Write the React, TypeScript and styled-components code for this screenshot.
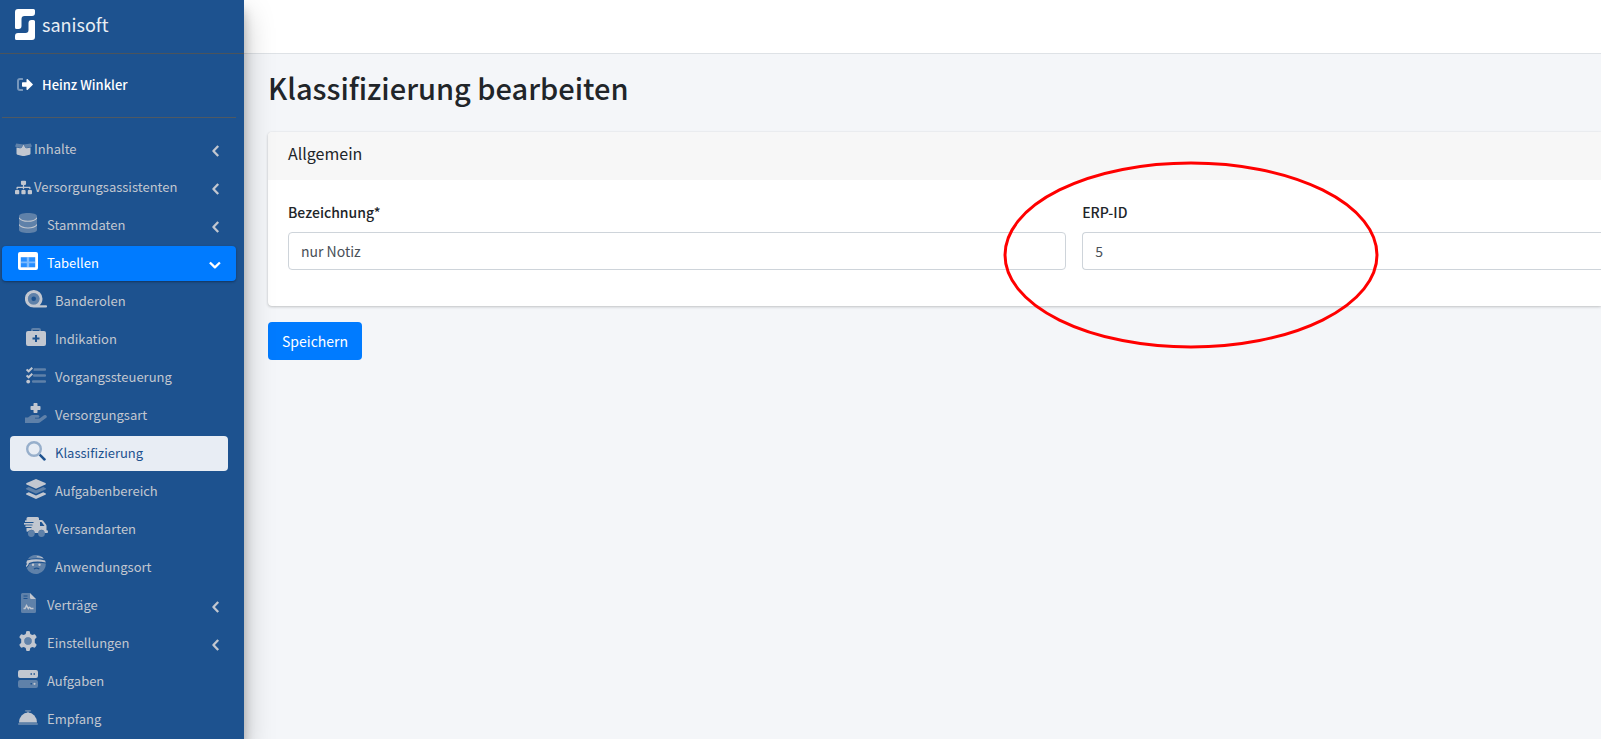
import React from "react";
import styled, { createGlobalStyle, css } from "styled-components";
import { FaSitemap } from "react-icons/fa";

const GlobalStyle = createGlobalStyle`
  *, *::before, *::after { box-sizing: border-box; }
  body {
    margin: 0;
    background: #f4f6f9;
    color: #212529;
    font-family: "Noto Sans CJK SC", "Noto Sans", sans-serif;
    font-size: 14px;
    line-height: 24px;
    overflow-x: hidden;
  }
`;

const Shell = styled.div`
  display: grid;
  grid-template-columns: 244px minmax(0, 1fr);
  min-height: 100vh;
`;

const Sidebar = styled.aside`
  position: relative;
  z-index: 1;
  background: #1d528f;
  color: #c2c7d0;
  font-size: 13px;
  box-shadow: 0 14px 28px rgba(0, 0, 0, 0.25), 0 10px 10px rgba(0, 0, 0, 0.22);
`;

const Brand = styled.a`
  display: flex;
  align-items: center;
  gap: 7px;
  height: 54px;
  padding: 0 15px 4px;
  border-bottom: 1px solid #4b545c;
  color: #e9eef4;
  font-size: 18px;
  text-decoration: none;
`;

const BrandName = styled.span`
  padding-bottom: 2px;
`;

const UserPanel = styled.div`
  display: flex;
  height: 64px;
  margin: 0 8px 14px 2px;
  border-bottom: 1px solid #4f5962;
`;

const UserLink = styled.a`
  display: flex;
  align-items: center;
  gap: 9px;
  padding: 0 0 2px 15px;
  color: #fff;
  font-weight: 500;
  text-decoration: none;
`;

const NavList = styled.ul<{ $nested?: boolean }>`
  display: flex;
  flex-direction: column;
  gap: 3px;
  margin: 0;
  padding: ${(p) => (p.$nested ? "3px 8px 0" : "0 8px 0 2px")};
  list-style: none;
`;

type Tone = "plain" | "open" | "current";

const NavLink = styled.a<{ $tone: Tone }>`
  display: flex;
  align-items: center;
  height: 35px;
  padding: 0 15px 0 13px;
  border-radius: 4px;
  color: inherit;
  text-decoration: none;
  ${(p) =>
    p.$tone === "open" &&
    css`
      background: #007bff;
      color: #fff;
      box-shadow: 0 1px 3px rgba(0, 0, 0, 0.12), 0 1px 2px rgba(0, 0, 0, 0.24);
    `}
  ${(p) =>
    p.$tone === "current" &&
    css`
      background: #e8edf4;
      color: #1d528f;
    `}
`;

const IconSlot = styled.span<{ $small?: boolean }>`
  display: flex;
  flex: none;
  justify-content: center;
  width: ${(p) => (p.$small ? 17 : 26)}px;
  margin-right: ${(p) => (p.$small ? 2 : 6)}px;
  padding-bottom: ${(p) => (p.$small ? 0 : 5)}px;
`;

const NavText = styled.span`
  flex: 1;
  padding-bottom: 2px;
`;

const Content = styled.div`
  min-width: 0;
`;

const TopBar = styled.header`
  height: 54px;
  background: #fff;
  border-bottom: 1px solid #dee2e6;
`;

const Page = styled.main`
  padding: 14px 0 16px 24px;
`;

const Title = styled.h1`
  margin: 0 0 26px;
  font-size: 29px;
  font-weight: 500;
  line-height: 38px;
`;

const Card = styled.section`
  margin-bottom: 16px;
  border-radius: 4px 0 0 4px;
  background: #fff;
  box-shadow: 0 0 1px rgba(0, 0, 0, 0.125), 0 1px 3px rgba(0, 0, 0, 0.2);
`;

const CardHeader = styled.h2`
  margin: 0;
  padding: 9px 20px 15px;
  border-radius: 4px 0 0 0;
  background: #f7f7f7;
  font-size: 16px;
  font-weight: 400;
  line-height: 24px;
`;

const CardBody = styled.div`
  display: grid;
  grid-template-columns: 3fr 2fr;
  gap: 16px;
  padding: 20px 0 36px 20px;
`;

const Field = styled.div`
  position: relative;
  display: flex;
  flex-direction: column;
  gap: 8px;
`;

const Label = styled.label`
  font-weight: 500;
`;

const Input = styled.input<{ $flush?: boolean }>`
  width: 100%;
  height: 38px;
  padding: 0 12px;
  border: 1px solid #ced4da;
  border-right-width: ${(p) => (p.$flush ? 0 : 1)}px;
  border-radius: ${(p) => (p.$flush ? "4px 0 0 4px" : "4px")};
  background: #fff;
  color: #495057;
  font: inherit;
`;

const Highlight = styled.svg`
  position: absolute;
  top: -39px;
  left: -79px;
  pointer-events: none;
`;

const SaveButton = styled.button`
  height: 38px;
  padding: 0 14px;
  border: 0;
  border-radius: 4px;
  background: #007bff;
  color: #fff;
  font: inherit;
`;

const Drawing = ({ w, h, children }: { w: number; h: number; children: React.ReactNode }) => (
  <svg width={w} height={h} viewBox={`0 0 ${w} ${h}`} fill="currentColor" aria-hidden="true">
    {children}
  </svg>
);

const Logo = () => (
  <Drawing w={20} h={31}>
    <g fill="#fff">
      <path d="M3 0H18.500Q20 0 20 1.500V4Q20 7 17 7H9.500Q6.500 7 6.500 10V17Q6.500 20 3.500 20H1.500Q0 20 0 18.500V3Q0 0 3 0Z" />
      <path d="M17 31H1.500Q0 31 0 29.500V27Q0 24 3 24H10.500Q13.500 24 13.500 21V14Q13.500 11 16.500 11H18.500Q20 11 20 12.500V28Q20 31 17 31Z" />
    </g>
  </Drawing>
);

const SignOutIcon = () => (
  <Drawing w={16} h={13}>
    <path opacity=".4" d="M5.500 0H3Q0 0 0 3V10Q0 13 3 13H5.500Q6 13 6 12.500V11.500Q6 11 5.500 11H3Q2 11 2 10V3Q2 2 3 2H5.500Q6 2 6 1.500V.5Q6 0 5.500 0Z" />
    <path d="M15.600 5.900L10.800 1.200Q9.700 .5 9.500 1.800V4.300H5.700Q5 4.300 5 5V8Q5 8.700 5.700 8.700H9.500V11.200Q9.700 12.500 10.800 11.800L15.600 7.100Q16.200 6.500 15.600 5.900Z" />
  </Drawing>
);

const BoxIcon = () => (
  <Drawing w={17} h={13}>
    <path opacity=".4" d="M1.200 .6L8.500 1.500L6.500 4.500Q6 5.200 5.300 5L.6 3.800Q0 3.500 .2 3ZM15.800 .6L8.500 1.500L10.500 4.500Q11 5.200 11.700 5L16.400 3.800Q17 3.500 16.800 3Z" />
    <path d="M8.500 1.500L10.200 4.500Q10.800 5.500 12 5.300L15.500 4.400V10.500Q15.500 11.400 14.600 11.700L9.500 12.900Q8.500 13.100 7.500 12.900L2.400 11.700Q1.500 11.400 1.500 10.500V4.400L5 5.300Q6.200 5.500 6.800 4.500Z" />
  </Drawing>
);

const DatabaseIcon = () => (
  <Drawing w={18} h={20}>
    <path opacity=".4" d="M0 3C0 1.300 4 0 9 0S18 1.300 18 3V17C18 18.700 14 20 9 20S0 18.700 0 17Z" />
    <path fill="none" stroke="currentColor" strokeWidth="1.100" d="M0 4.800C1.500 7.200 5 8.300 9 8.300S16.500 7.200 18 4.800M0 11.600C1.500 14 5 15 9 15S16.500 14 18 11.600" />
  </Drawing>
);

const TableIcon = () => (
  <Drawing w={20} h={18}>
    <path fillRule="evenodd" d="M2 0H18Q20 0 20 2V16Q20 18 18 18H2Q0 18 0 16V2Q0 0 2 0ZM2.800 5.300V15.200H17.200V5.300Z" />
    <path opacity=".4" d="M2.800 9.600H8.800V5.300H11.200V9.600H17.200V11.200H11.200V15.200H8.800V11.200H2.800Z" />
    <path opacity=".15" d="M2.800 5.300H17.200V15.200H2.800Z" />
  </Drawing>
);

const TapeIcon = () => (
  <Drawing w={22} h={18}>
    <path fillRule="evenodd" d="M8.700 0A8.700 8.700 0 0 1 17.500 8.700C17.500 11.500 16.300 13.800 14.700 15.200H21Q22 15.200 22 16V16.800Q22 17.600 21 17.600H8.700A8.800 8.800 0 0 1 8.700 0ZM8.700 3A5.800 5.800 0 1 0 8.700 14.600A5.800 5.800 0 1 0 8.700 3Z" />
    <path opacity=".4" fillRule="evenodd" d="M8.700 3A5.800 5.800 0 1 1 8.700 14.600A5.800 5.800 0 1 1 8.700 3ZM8.700 6.500A2.300 2.300 0 1 0 8.700 11.100A2.300 2.300 0 1 0 8.700 6.500Z" />
  </Drawing>
);

const MedkitIcon = () => (
  <Drawing w={20} h={18}>
    <path opacity=".4" d="M5 3.500V2Q5 0 7 0H13Q15 0 15 2V3.500H13V2H7V3.500Z" />
    <path fillRule="evenodd" d="M2 3H18Q20 3 20 5V16Q20 18 18 18H2Q0 18 0 16V5Q0 3 2 3ZM9 7V9.500H6.500V11.500H9V14H11V11.500H13.500V9.500H11V7Z" />
  </Drawing>
);

const TasksIcon = () => (
  <Drawing w={20} h={17}>
    <path opacity=".4" d="M8 1.200H19Q20 1.200 20 2V2.900Q20 3.700 19 3.700H8Q7 3.700 7.500 2.900ZM8 7.200H19Q20 7.200 20 8V8.900Q20 9.700 19 9.700H8Q7 9.700 7 8.900V8Q7 7.200 8 7.200ZM7 13.200H19Q20 13.200 20 14V14.900Q20 15.700 19 15.700H7Q6 15.700 6 14.900V14Q6 13.200 7 13.200Z" />
    <path fill="none" stroke="currentColor" strokeWidth="2" d="M.6 2.400L2.600 4.300L6.300 .7M.6 8.400L2.600 10.300L6.300 6.700" />
    <circle cx="2.200" cy="14.600" r="1.900" />
  </Drawing>
);

const HandIcon = () => (
  <Drawing w={22} h={20}>
    <path d="M9.200 0H11.800Q12.500 0 12.500 .7V3H14.800Q15.500 3 15.500 3.700V6.300Q15.500 7 14.800 7H12.500V9.300Q12.500 10 11.800 10H9.200Q8.500 10 8.500 9.300V7H6.200Q5.500 7 5.500 6.300V3.700Q5.500 3 6.200 3H8.500V.7Q8.500 0 9.200 0Z" />
    <path opacity=".4" d="M0 14.500H3L5 13Q6.200 12 7.500 12H13Q14.600 12.200 14.500 13.600Q14.300 14.800 13 14.800H10V15.500H14.500L19 12.300Q20.500 11.500 21.500 12.700Q22.300 13.800 21.300 14.800L15.500 19Q14.400 20 13 20H0Z" />
  </Drawing>
);

const SearchIcon = () => (
  <Drawing w={20} h={20}>
    <circle cx="8" cy="8" r="6.800" fill="none" stroke="currentColor" strokeWidth="2.400" opacity=".4" />
    <path d="M12.800 14.500L14.500 12.800L19.600 17.700Q20.200 18.400 19.400 19.300Q18.500 20.100 17.700 19.600Z" />
  </Drawing>
);

const LayersIcon = () => (
  <Drawing w={20} h={20}>
    <path d="M10 0L19.400 4.100Q20.500 5 19.400 5.600L10 9.700L.6 5.600Q-.5 5 .6 4.100Z" />
    <path opacity=".4" d="M2.800 8L10 11.200L17.200 8L19.400 9.100Q20.500 9.800 19.400 10.600L10 14.700L.6 10.600Q-.5 9.800 .6 9.100Z" />
    <path d="M2.800 13.200L10 16.400L17.200 13.200L19.400 14.300Q20.500 15 19.400 15.800L10 20L.6 15.800Q-.5 15 .6 14.300Z" />
  </Drawing>
);

const TruckIcon = () => (
  <Drawing w={24} h={20}>
    <path fillRule="evenodd" d="M4 0H13.500Q15 0 15 1.500V3H17.500Q18.300 3 18.900 3.600L22 7.500Q22.500 8 22.500 9V13.300H23.300Q24 13.500 24 14.500Q24 16 23.300 16H20.800Q20.300 12.700 17.500 12.700T14.200 16H10.800Q10.300 12.700 7.300 12.700Q5.500 12.700 4 14.200Q2.500 15.700 2.500 13.500V11H7.500V10H1.500V8.500H8.500V7.500H0V6H9.500V5H1V3.500H2.500V1.500Q2.500 0 4 0ZM16 5V9H20.500L17.500 5Z" />
    <g opacity=".4">
      <path d="M1 3.500H10.500V5H1ZM0 6H9.500V7.500H0ZM1.500 8.500H8.500V10H1.500Z" />
      <circle cx="7.300" cy="16.500" r="3.400" />
      <circle cx="17.500" cy="16.500" r="3.400" />
    </g>
  </Drawing>
);

const BandageIcon = () => (
  <Drawing w={20} h={20}>
    <path opacity=".4" fillRule="evenodd" d="M1.800 4.200A10 10 0 0 1 18 4Q11 2.200 1.800 4.200ZM.7 13.200Q2.800 11.700 3.500 9Q10 7 19.800 8.500A10 10 0 0 1 .7 13.200ZM8.200 14.500Q10.500 13 13 14.500L13.600 13.600Q10.500 11.500 7.600 13.600Z" />
    <path d="M1 5.500Q10 3 19 5.500L19.800 7.500Q10 5.500 3 8Q2.500 10.500 .4 12.200L0 10.500Q1 9.500 1.200 8.200L.2 8.500ZM11 1.300Q14 1.200 16 2L17.500 3.500Q13 2.200 10.500 2.300Z" />
    <circle cx="7" cy="9.800" r="1.200" />
    <circle cx="13.500" cy="9.800" r="1.200" />
  </Drawing>
);

const ContractIcon = () => (
  <Drawing w={15} h={20}>
    <path opacity=".4" fillRule="evenodd" d="M1.500 0H9V4.500Q9 6 10.500 6H15V18.500Q15 20 13.500 20H1.500Q0 20 0 18.500V1.500Q0 0 1.500 0ZM2.500 2.500V3.500H6.500V2.500ZM2.500 5V6H6.500V5Z" />
    <path d="M9 0L15 6H10Q9 6 9 5Z" />
    <path fill="none" stroke="currentColor" strokeWidth="1.500" d="M2.500 15.500H4L5.500 12.500L7.300 15.500Q8.500 13 9.700 15.500H12.500" />
  </Drawing>
);

const CogIcon = () => (
  <Drawing w={20} h={20}>
    <circle cx="10" cy="10" r="3.700" opacity=".4" />
    <path fillRule="evenodd" d="M8.300 .3Q10 -.1 11.700 .3L12.300 2.900L14.200 4L16.800 3.200Q18.200 4.800 18.700 6.300L16.800 8.200V11.800L18.700 13.700Q18.200 15.200 16.800 16.800L14.200 16L12.300 17.100L11.700 19.700Q10 20.100 8.300 19.700L7.700 17.100L5.800 16L3.200 16.800Q1.800 15.200 1.300 13.700L3.200 11.800V8.200L1.300 6.300Q1.800 4.800 3.200 3.200L5.800 4L7.700 2.900ZM10 6.300A3.700 3.700 0 1 0 10 13.700A3.700 3.700 0 1 0 10 6.300Z" />
  </Drawing>
);

const ServerIcon = () => (
  <Drawing w={20} h={18}>
    <path fillRule="evenodd" d="M2 0H18Q20 0 20 2V6Q20 8 18 8H2Q0 8 0 6V2Q0 0 2 0ZM12.500 3.300V4.700H14V3.300ZM15.500 3.300V4.700H17V3.300Z" />
    <path opacity=".4" fillRule="evenodd" d="M2 10H18Q20 10 20 12V16Q20 18 18 18H2Q0 18 0 16V12Q0 10 2 10ZM12.500 13V14.500H14V13Z" />
    <circle cx="16.500" cy="13.800" r="1.100" />
  </Drawing>
);

const BellIcon = () => (
  <Drawing w={20} h={15}>
    <path opacity=".4" d="M8 0H12Q13 0 13 .8T12 1.700H11V3H9V1.700H8Q7 1.700 7 .8T8 0ZM1 13H19Q20 13 20 14T19 15H1Q0 15 0 14T1 13Z" />
    <path d="M1 12.500A9 10 0 0 1 19 12.500Z" />
  </Drawing>
);

const Arrow = ({ down }: { down?: boolean }) => (
  <svg width="12" height="14" viewBox="0 0 12 14" fill="none" stroke="currentColor" strokeWidth="2.300" strokeLinejoin="round" aria-hidden="true">
    <path d={down ? "M.9 5.500L5.900 10.300L10.900 5.500" : "M9.200 3L4.400 8L9.200 13"} />
  </svg>
);

type Item = {
  label: string;
  icon: React.ReactNode;
  small?: boolean;
  tone?: Tone;
  expandable?: boolean;
  children?: Item[];
};

const items: Item[] = [
  { label: "Inhalte", icon: <BoxIcon />, small: true, expandable: true },
  { label: "Versorgungsassistenten", icon: <FaSitemap size={17} />, small: true, expandable: true },
  { label: "Stammdaten", icon: <DatabaseIcon />, expandable: true },
  {
    label: "Tabellen",
    icon: <TableIcon />,
    tone: "open",
    expandable: true,
    children: [
      { label: "Banderolen", icon: <TapeIcon /> },
      { label: "Indikation", icon: <MedkitIcon /> },
      { label: "Vorgangssteuerung", icon: <TasksIcon /> },
      { label: "Versorgungsart", icon: <HandIcon /> },
      { label: "Klassifizierung", icon: <SearchIcon />, tone: "current" },
      { label: "Aufgabenbereich", icon: <LayersIcon /> },
      { label: "Versandarten", icon: <TruckIcon /> },
      { label: "Anwendungsort", icon: <BandageIcon /> },
    ],
  },
  { label: "Verträge", icon: <ContractIcon />, expandable: true },
  { label: "Einstellungen", icon: <CogIcon />, expandable: true },
  { label: "Aufgaben", icon: <ServerIcon /> },
  { label: "Empfang", icon: <BellIcon /> },
];

const NavItem = ({ item }: { item: Item }) => (
  <li>
    <NavLink href="#" $tone={item.tone ?? "plain"} aria-current={item.tone === "current" ? "page" : undefined}>
      <IconSlot $small={item.small}>{item.icon}</IconSlot>
      <NavText>{item.label}</NavText>
      {item.expandable && <Arrow down={item.tone === "open"} />}
    </NavLink>
    {item.children && (
      <NavList $nested>
        {item.children.map((child) => (
          <NavItem key={child.label} item={child} />
        ))}
      </NavList>
    )}
  </li>
);

export default function App() {
  return (
    <>
      <GlobalStyle />
      <Shell>
        <Sidebar>
          <Brand href="#">
            <Logo />
            <BrandName>sanisoft</BrandName>
          </Brand>
          <UserPanel>
            <UserLink href="#">
              <SignOutIcon />
              <span>Heinz Winkler</span>
            </UserLink>
          </UserPanel>
          <nav>
            <NavList>
              {items.map((item) => (
                <NavItem key={item.label} item={item} />
              ))}
            </NavList>
          </nav>
        </Sidebar>
        <Content>
          <TopBar />
          <Page>
            <Title>Klassifizierung bearbeiten</Title>
            <form onSubmit={(e) => e.preventDefault()}>
              <Card>
                <CardHeader>Allgemein</CardHeader>
                <CardBody>
                  <Field>
                    <Label htmlFor="bezeichnung">Bezeichnung*</Label>
                    <Input id="bezeichnung" type="text" defaultValue="nur Notiz" />
                  </Field>
                  <Field>
                    <Label htmlFor="erp-id">ERP-ID</Label>
                    <Input id="erp-id" type="text" defaultValue="5" $flush />
                    <Highlight width="376" height="188" viewBox="0 0 376 188" aria-hidden="true">
                      <ellipse cx="188" cy="94" rx="186" ry="92" fill="none" stroke="#f00" strokeWidth="3" />
                    </Highlight>
                  </Field>
                </CardBody>
              </Card>
              <SaveButton type="submit">Speichern</SaveButton>
            </form>
          </Page>
        </Content>
      </Shell>
    </>
  );
}
